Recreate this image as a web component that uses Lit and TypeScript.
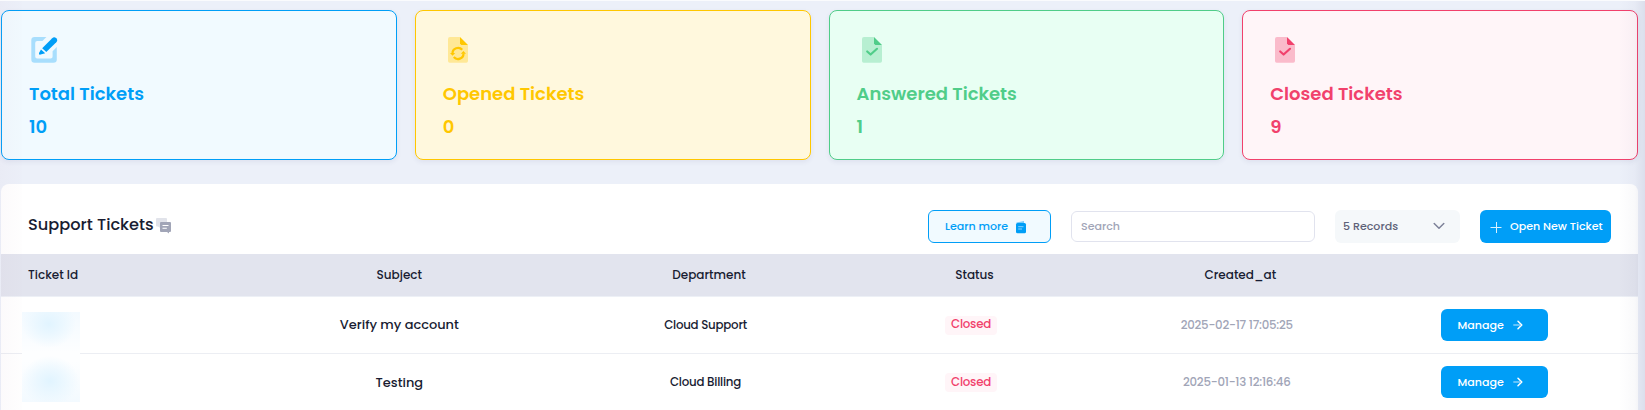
import { LitElement, html, svg, css, TemplateResult } from 'lit';
import { customElement, property } from 'lit/decorators.js';

interface Stat {
  kind: string;
  title: string;
  value: string;
}

interface Ticket {
  subject: string;
  department: string;
  created: string;
}

const STATS: Stat[] = [
  { kind: 'total', title: 'Total Tickets', value: '10' },
  { kind: 'opened', title: 'Opened Tickets', value: '0' },
  { kind: 'answered', title: 'Answered Tickets', value: '1' },
  { kind: 'closed', title: 'Closed Tickets', value: '9' },
];

const TICKETS: Ticket[] = [
  { subject: 'Verify my account', department: 'Cloud Support', created: '2025-02-17 17:05:25' },
  { subject: 'Testing', department: 'Cloud Billing', created: '2025-01-13 12:16:46' },
];

const editIcon = svg`
  <path fill="currentColor" opacity="0.3" d="M5.6 1H17.4L13.4 5H8.2a2 2 0 0 0-2 2V20.4a2 2 0 0 0 2 2H21.6a2 2 0 0 0 2-2V15.2L27.8 11V23.4a3.3 3.3 0 0 1-3.3 3.3H5.6a3.3 3.3 0 0 1-3.3-3.3V4.3A3.3 3.3 0 0 1 5.6 1z"/>
  <path fill="currentColor" d="M13.2 12.2 23.2 2.2a2.9 2.9 0 0 1 4.1 4.1L17.3 16z"/>
  <path fill="currentColor" d="M12 13.4 16.2 17.2 11.6 18.6Q9.4 19 10 17z"/>`;

const page = svg`
  <path fill="currentColor" opacity="0.32" d="M7 1H17V9H25V25a1.7 1.7 0 0 1-1.7 1.7H6.7A1.7 1.7 0 0 1 5 25V3A2 2 0 0 1 7 1z"/>
  <path fill="currentColor" d="M17 1 25 9H18.4A1.4 1.4 0 0 1 17 7.6z"/>`;

const refreshIcon = svg`${page}
  <path fill="none" stroke="currentColor" stroke-width="2.2" d="M9.5 17.4A5.5 5.5 0 0 1 19.2 13.8M20.5 17.4A5.5 5.5 0 0 1 10.8 21"/>
  <path fill="currentColor" d="M7 17H12.2L9.6 19.8zM17.8 17.8H23L20.4 15z"/>`;

const checkIcon = svg`${page}
  <path fill="none" stroke="currentColor" stroke-width="2.2" stroke-linecap="round" stroke-linejoin="round" d="M10.2 15.5 13.6 18.5 20 12.8"/>`;

const ICONS: Record<string, TemplateResult<2>> = {
  total: editIcon,
  opened: refreshIcon,
  answered: checkIcon,
  closed: checkIcon,
};

@customElement('stat-card')
class StatCard extends LitElement {
  @property({ attribute: false }) stat!: Stat;

  static styles = css`
    :host { display: block; }
    .card {
      box-sizing: border-box;
      height: 150px;
      padding: 25px 27px 0;
      border: 1px solid currentColor;
      border-radius: 8px;
      box-shadow: 0 2px 5px rgba(60, 70, 110, 0.08);
    }
    .total { color: #009ef7; background: #f1faff; }
    .opened { color: #ffc700; background: #fff8dd; }
    .answered { color: #50cd89; background: #e8fff3; }
    .closed { color: #f1416c; background: #fff5f8; }
    .icon { display: block; width: 30px; height: 28px; }
    .title, .value { font-size: 18px; font-weight: 600; line-height: 26px; white-space: nowrap; }
    .title { margin-top: 17px; }
    .value { margin-top: 7px; }
  `;

  render() {
    const s = this.stat;
    return html`<div class="card ${s.kind}">
      <svg class="icon" viewBox="0 0 30 28">${ICONS[s.kind]}</svg>
      <div class="title">${s.title}</div>
      <div class="value">${s.value}</div>
    </div>`;
  }
}

@customElement('app-root')
class AppRoot extends LitElement {
  static styles = css`
    :host {
      display: block;
      position: relative;
      box-sizing: border-box;
      height: 410px;
      overflow: hidden;
      padding: 9px 7px 0 1px;
      border-top: 1px solid #fafbfd;
      background: #ecf0f9;
      font-family: Poppins, Inter, sans-serif;
      font-weight: 500;
      color: #181c32;
    }
    :host::before, :host::after {
      content: '';
      position: absolute;
      top: 0;
      bottom: 0;
      pointer-events: none;
      z-index: 2;
    }
    :host::before { left: 0; width: 22px; background: linear-gradient(to right, rgba(190, 150, 180, 0.05), rgba(190, 150, 180, 0.01)); }
    :host::after { right: 0; width: 26px; background: linear-gradient(to right, rgba(70, 70, 120, 0), rgba(70, 70, 120, 0.03) 60%, rgba(70, 70, 120, 0.1)); }
    .stats { display: grid; grid-template-columns: repeat(4, 1fr); gap: 18px; }
    .panel { margin-top: 24px; height: 240px; border-radius: 8px 8px 0 0; background: #fff; overflow: hidden; }
    .toolbar { display: flex; align-items: flex-start; box-sizing: border-box; height: 70px; padding: 26px 27px 0 27px; }
    .heading { display: flex; margin: 3px auto 0 0; font-size: 16.2px; line-height: 24px; }
    .chat { width: 16px; height: 16px; margin: 5px 0 0 2px; }
    .control { display: flex; align-items: center; box-sizing: border-box; height: 33px; border-radius: 6px; font-size: 11.05px; line-height: 20px; white-space: nowrap; }
    .control svg { flex: none; }
    .learn { width: 123px; padding: 0 0 1px 16px; border: 1px solid #009ef7; background: #f1faff; color: #009ef7; }
    .book { width: 12px; height: 14px; margin: 1px 0 0 7px; }
    .search { width: 244px; height: 31px; margin: 1px 20px 0; padding: 0 0 1px 9px; border: 1px solid #e1e3ee; color: #a1a5b7; }
    .records { width: 125px; padding: 0 15px 1px 8px; justify-content: space-between; background: #f5f8fa; color: #5e6278; }
    .chevron { width: 12px; height: 8px; }
    .open { width: 131px; margin-left: 20px; padding: 0 0 1px 10px; background: #009ef7; color: #fff; }
    .plus { width: 12px; height: 12px; margin: 2px 8px 0 0; }
    .row {
      display: grid;
      grid-template-columns: 264px 268.6px 343.8px 187.2px 344.4px 171px;
      align-items: center;
      justify-items: center;
      box-sizing: border-box;
      height: 57.2px;
      border-bottom: 1px solid #eceef3;
      font-size: 11.8px;
      line-height: 20px;
      white-space: nowrap;
    }
    .head { height: 43px; border-color: #edf0f6; background: #e2e4ee; font-size: 12.025px; }
    .id { justify-self: start; padding-left: 27px; }
    .shifted { padding-left: 7px; }
    .subject { margin-top: 0.6px; font-size: 12.95px; }
    .department, .badge, .date { letter-spacing: -0.23px; }
    .badge { margin-top: 1px; padding: 0.3px 6px 2.7px; border-radius: 4px; line-height: 16px; background: #fff5f8; color: #f1416c; }
    .date { color: #a1a5b7; }
    .manage { width: 107px; height: 32px; padding: 0 0 0 16.6px; background: #009ef7; color: #fff; }
    .arrow { width: 10px; height: 10px; margin-left: 9.4px; }
    .redaction {
      position: absolute;
      z-index: 1;
      left: 22px;
      top: 311px;
      width: 58px;
      height: 90px;
      background:
        radial-gradient(ellipse 27px 24px at 27px 12px, #e1f4ff, rgba(228, 245, 255, 0.6) 50%, rgba(246, 252, 255, 0)),
        radial-gradient(ellipse 29px 25px at 28px 69px, #e1f4ff, rgba(228, 245, 255, 0.6) 50%, rgba(246, 252, 255, 0)),
        linear-gradient(to bottom, #f3faff, #fdfeff 45%, #fdfeff 55%, #f3faff);
    }
  `;

  render() {
    return html`
      <div class="stats">${STATS.map((s) => html`<stat-card .stat=${s}></stat-card>`)}</div>
      <div class="panel">
        <div class="toolbar">
          <div class="heading">Support Tickets
            <svg class="chat" viewBox="0 0 16 16">
              <path fill="#e1e3ea" d="M1 0H10Q11 0 11 1V4H5V10.5L2 8.5H1Q0 8.5 0 7.5V1Q0 0 1 0z"/>
              <path fill="#a1a5b7" d="M5 4H14Q15 4 15 5V13Q15 14 14 14H13V15.5L11 14H5Q4 14 4 13V5Q4 4 5 4z"/>
              <path stroke="#fff" stroke-width="1.1" d="M6.5 7.5H12.5M6.5 10.3H10.8"/>
            </svg>
          </div>
          <div class="control learn">Learn more
            <svg class="book" viewBox="0 0 12 14">
              <path fill="#009ef7" opacity="0.5" d="M1.5 2.6 9 1V3.5H1.5z"/>
              <rect x="1" y="3" width="10" height="10.3" rx="1.5" fill="#009ef7"/>
              <path stroke="#8bd3fd" stroke-width="1" d="M3.2 6.7H8.5M3.2 9H7"/>
            </svg>
          </div>
          <div class="control search">Search</div>
          <div class="control records">5 Records
            <svg class="chevron" viewBox="0 0 12 8"><path fill="none" stroke="#7e8299" stroke-width="1.5" stroke-linecap="round" stroke-linejoin="round" d="M1.2 1.5 6 6.2 10.8 1.5"/></svg>
          </div>
          <div class="control open">
            <svg class="plus" viewBox="0 0 12 12"><path stroke="#fff" stroke-width="1" d="M.5 6.5H11.5M6.500 1V12" opacity="0.85"/></svg>Open New Ticket
          </div>
        </div>
        <div class="row head">
          <span class="id">Ticket Id</span>
          <span>Subject</span>
          <span class="shifted">Department</span>
          <span class="shifted">Status</span>
          <span class="shifted">Created_at</span>
        </div>
        ${TICKETS.map((t) => html`<div class="row">
          <span></span>
          <span class="subject">${t.subject}</span>
          <span class="department">${t.department}</span>
          <span class="badge">Closed</span>
          <span class="date">${t.created}</span>
          <span class="control manage">Manage
            <svg class="arrow" viewBox="0 0 10 10">
              <path stroke="#fff" stroke-width="1.3" opacity="0.6" d="M.3 5H7"/>
              <path fill="none" stroke="#fff" stroke-width="1.5" stroke-linecap="round" stroke-linejoin="round" d="M5 1.2 8.8 5 5 8.8"/>
            </svg>
          </span>
        </div>`)}
      </div>
      <div class="redaction"></div>
    `;
  }
}
